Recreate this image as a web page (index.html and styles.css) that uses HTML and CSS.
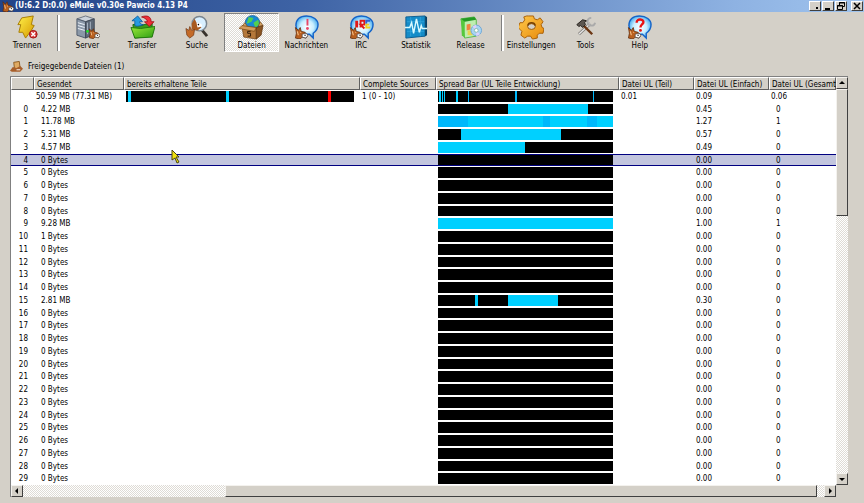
FILE: index.html
```html
<!DOCTYPE html>
<html lang="de">
<head>
<meta charset="utf-8">
<title>eMule</title>
<link rel="stylesheet" href="styles.css">
</head>
<body>
<svg class="defs" aria-hidden="true">
  <defs>
    <linearGradient id="gold" x2="1" y2="1"><stop offset="0" stop-color="#fff04a"/><stop offset="1" stop-color="#d69a00"/></linearGradient>
    <linearGradient id="orange" x2="1" y2="1"><stop offset="0" stop-color="#ffc94a"/><stop offset="1" stop-color="#e78a0c"/></linearGradient>
    <linearGradient id="green" x2="1" y2="1"><stop offset="0" stop-color="#9be83a"/><stop offset="1" stop-color="#2c9e12"/></linearGradient>
    <radialGradient id="bubble"><stop offset="0" stop-color="#fff"/><stop offset=".6" stop-color="#c8eeff"/><stop offset="1" stop-color="#58b4f0"/></radialGradient>
    <symbol id="mule" viewBox="0 0 14 13">
      <path d="M1 1l3 3 2-3 1 4 4 1 3 3-2 3-4-1-2 2-5-1 1-5z" fill="#b9601f" stroke="#5e2a0a" stroke-width=".8"/>
      <path d="M8 8l4-1 2 2-2 3-4-1z" fill="#fff" stroke="#444" stroke-width=".7"/>
      <path d="M3 5l1 4M6 6h1" stroke="#ffd09a"/><circle cx="11" cy="9" r=".8" fill="#222"/>
    </symbol>
    <symbol id="balloon" viewBox="0 0 26 26">
      <path d="M13 1C6 1 2 5 2 11c0 5 4 9 10 9l4 0 4 4 0-5c3-2 5-5 5-9 0-5-5-9-12-9z" fill="url(#bubble)" stroke="#1464c8" stroke-width="1.5"/>
    </symbol>
  </defs>
</svg>
<header class="titlebar">
  <svg class="app-icon" viewBox="0 0 14 13"><use href="#mule"/></svg>
  <h1>(U:6.2 D:0.0) eMule v0.30e Pawcio 4.13 P4</h1>
  <div class="window-buttons">
    <button aria-label="In den Tray"><svg viewBox="0 0 10 8"><path d="M6 6h2" stroke="#000" stroke-width="2"/></svg></button>
    <button aria-label="Minimieren"><svg viewBox="0 0 10 8"><path d="M2 7h5" stroke="#000" stroke-width="2"/></svg></button>
    <button aria-label="Wiederherstellen"><svg viewBox="0 0 10 8"><path d="M3.5 3V.5h5v4H7M1.500 3.500h5v4h-5zM3 1h6M1 4h6" fill="none" stroke="#000"/></svg></button>
    <button class="close" aria-label="Schließen"><svg viewBox="0 0 10 8"><path d="M2 1l6 6M8 1L2 7" stroke="#000" stroke-width="1.500"/></svg></button>
  </div>
</header>
<nav class="toolbar">
  <div class="group one">
    <button><svg viewBox="0 0 26 26"><path d="M7 3l12-2-2 9 3 1-3 5-6 8-3-6-4 0 2-8-3 0z" fill="url(#gold)" stroke="#a87c00"/><circle cx="19" cy="20" r="4" fill="#d83c3c" stroke="#a01010"/><path d="M17 18l4 4M21 18l-4 4" stroke="#fff" stroke-width="1.500"/></svg>Trennen</button>
  </div>
  <div class="group eight">
    <button><svg viewBox="0 0 26 26"><path d="M2 4l9-3 9 3-9 3z" fill="#ccd2da" stroke="#6c7480"/><path d="M2 4l9 3v17l-9-3z" fill="#8b98a8" stroke="#505c6c"/><path d="M20 4l-9 3v17l9-4z" fill="#5d6978" stroke="#3f4955"/><path d="M3 8l7 2M3 11l7 2M3 14l7 2" stroke="#eef4fa"/><path d="M13 8v12M16 7v12" stroke="#a7b2bf"/><circle cx="13" cy="17" r="1.500" fill="#1ee01e"/><use href="#mule" x="14" y="13" width="12" height="12"/></svg>Server</button>
    <button><svg viewBox="0 0 26 26"><path d="M3 10l6-1 2 2 12-3v14l-18 2z" fill="#3a9b1c" stroke="#1b6c0c"/><path d="M1 13l4 11 18-1 3-11-15 2z" fill="url(#green)" stroke="#20780c"/><path d="M5 11V6H2l6-5 5 6h-3c0 2 2 3 4 3-4 2-8 2-9 1z" fill="#269ae0" stroke="#09549a" stroke-width=".8"/><path d="M12 2c5-2 10-1 10 5h3l-5 5-5-5h3c0-2-2-4-6-5z" fill="#f03038" stroke="#9c0810" stroke-width=".8"/></svg>Transfer</button>
    <button><svg viewBox="0 0 26 26"><path d="M19 16l5 6" stroke="#38322c" stroke-width="3"/><circle cx="16" cy="9" r="7.500" fill="#d8efff" stroke="#7a858f" stroke-width="1.500"/><path d="M8 9l3-5 2 4 4 2 1 3-4 3-6-1z" fill="#a85a20"/><path d="M13 8l5 1 1 3-5 1z" fill="#fff"/><circle cx="15" cy="10" r=".8"/><path d="M2 14l3 2 1-4 2 4 3-1-1 6-4 3-3-3z" fill="#c46a28" stroke="#6e3410" stroke-width=".7"/></svg>Suche</button>
    <button class="active" aria-pressed="true"><svg viewBox="0 0 26 26"><circle cx="14" cy="8" r="7.500" fill="#188ad4" stroke="#075490" stroke-width=".7"/><path d="M10 2l5 1-2 4-5 2zM15 8l5-3 1 5-4 3z" fill="#52cf50"/><path d="M3 12l3-4 3 4zM25 11l-3-4-2 5z" fill="#d7a566" stroke="#724514" stroke-width=".7"/><path d="M3 12l15 1v12l-13-2z" fill="#b5783a" stroke="#6c3d10" stroke-width=".7"/><path d="M18 13l7-2-2 10-5 4z" fill="#8a5422" stroke="#5a310c" stroke-width=".7"/><path d="M0 14l3-3 15 2-2 4z" fill="#d39c5c" stroke="#724514" stroke-width=".7"/><path d="M12 17h-3v2h3v3h-3" fill="none" stroke="#2e1a06"/></svg>Dateien</button>
    <button><svg viewBox="0 0 26 26"><use href="#balloon"/><path d="M14 4v7" stroke="#e84868" stroke-width="2"/><circle cx="14" cy="14" r="1.500" fill="#e84868"/><use href="#mule" x="0" y="12" width="15" height="13"/></svg>Nachrichten</button>
    <button><svg viewBox="0 0 26 26"><use href="#balloon"/><path d="M8 6v7" stroke="#e01818" stroke-width="3"/><path d="M12 13V6h4v4h-4l4 4" fill="none" stroke="#e01818" stroke-width="2"/><path d="M22 6h-4v3" fill="none" stroke="#3060d0" stroke-width="2"/><path d="M18 9v4h4M18 10h3" fill="none" stroke="#f0cf20" stroke-width="2"/><use href="#mule" x="0" y="12" width="15" height="13"/></svg>IRC</button>
    <button><svg viewBox="0 0 26 26"><path d="M3 2l20-1v21l-20 2z" fill="#148cc8" stroke="#0b5e92"/><path d="M23 1l2 1v19l-2 1z" fill="#064268"/><path d="M4 7h18M4 17h18M8 2v20M18 2v20" stroke="#35a9de" stroke-width=".7"/><path d="M2 13h5l2-5 2 11 3-15 3 14 2-7 1 3h5" fill="none" stroke="#d9faff" stroke-width="1.500"/></svg>Statistik</button>
    <button><svg viewBox="0 0 26 26"><path d="M3 4l14-2 2 3v17l-12 2z" fill="#bfeeb0" stroke="#58b94a"/><path d="M3 4l4 2v18l-3-3z" fill="#55c83d"/><path d="M3 4l14-2 2 3-12 2z" fill="#249a24"/><path d="M9 10l4-1v6l-4 1z" fill="#f08340"/><path d="M10 16h5v5h-5z" fill="#e8d34e"/><circle cx="19" cy="16" r="5.500" fill="#a7d4f4" stroke="#6fa7d4"/><path d="M19 16l-4-4 4-2zM19 16l4 4-4 2z" fill="#ddd1fc"/><circle cx="19" cy="16" r="2" fill="#fff" stroke="#8ba"/></svg>Release</button>
  </div>
  <div class="group three">
    <button><svg viewBox="0 0 26 26"><path d="M10 1h5l1 3 3 1 3-2 3 4-2 3 1 3 2 1-1 5-4 0-2 2 0 3-5 1-2-3h-3l-3 2-4-3 1-4-2-2-2-2 2-5 3 0 2-3-1-3 3-1z" fill="url(#orange)" stroke="#a95f06"/><ellipse cx="13" cy="12" rx="4" ry="3" fill="#d4d0c8" stroke="#9a5806"/><path d="M9 11c1-4 7-4 8 0" fill="none" stroke="#754005" stroke-width="1.500"/></svg>Einstellungen</button>
    <button><svg viewBox="0 0 26 26"><path d="M18 9L6 20" stroke="#76736e" stroke-width="3"/><path d="M18 9L6 20" stroke="#e5e5e5" stroke-width="1.500"/><path d="M23 8a4 4 0 1 1-4-5" fill="none" stroke="#aaa" stroke-width="2"/><path d="M10 10l10 10" stroke="#6c3714" stroke-width="2.500"/><path d="M4 10l6-5 4 1-2 2 1 2-3 3-2-2-2 1z" fill="#5c5650" stroke="#25211d"/></svg>Tools</button>
    <button><svg viewBox="0 0 26 26"><use href="#balloon"/><path d="M10 8c0-5 8-4 7 0-1 2-3 2-3 5" fill="none" stroke="#e81414" stroke-width="2.500"/><circle cx="14" cy="16" r="1.500" fill="#e81414"/><use href="#mule" x="0" y="12" width="15" height="13"/></svg>Help</button>
  </div>
</nav>
<main>
  <h2><svg viewBox="0 0 14 12"><path d="M4 1l6-1 1 8-6 1z" fill="#e0aa62" stroke="#8b5a20"/><path d="M0 10l3-4 4 1 4-2 3 3-3 3H2z" fill="#a85f2b"/><path d="M7 9h4" stroke="#fff"/></svg>Freigegebende Dateien (1)</h2>
  <div class="list">
    <table>
      <thead>
        <tr><th></th><th>Gesendet</th><th>bereits erhaltene Teile</th><th>Complete Sources</th><th>Spread Bar (UL Teile Entwicklung)</th><th>Datei UL (Teil)</th><th>Datei UL (Einfach)</th><th>Datei UL (Gesamt</th></tr>
      </thead>
      <tbody>
        <tr class="file"><td></td><td>50.59 MB (77.31 MB)</td><td><div class="bar parts"><i style="left:1%;width:1%"></i><i style="left:44%;width:1%"></i><i class="missing" style="left:88.5%;width:1.3%"></i></div></td><td>1 (0 - 10)</td><td><div class="bar"><i style="left:0.5%;width:1%"></i><i style="left:2%;width:0.6%"></i><i style="left:3.2%;width:0.8%"></i><i style="left:10.3%;width:1%"></i><i class="mid" style="left:17.2%;width:0.6%"></i><i class="mid" style="left:44.2%;width:0.9%"></i><i class="mid" style="left:88.6%;width:0.6%"></i></div></td><td>0.01</td><td>0.09</td><td>0.06</td></tr>
        <tr><td>0</td><td>4.22 MB</td><td></td><td></td><td><div class="bar"><i style="left:40%;width:45.5%"></i></div></td><td></td><td>0.45</td><td>0</td></tr>
        <tr><td>1</td><td>11.78 MB</td><td></td><td></td><td><div class="bar"><i style="left:0%;width:100%"></i><i class="mid" style="left:0%;width:17%"></i><i class="mid" style="left:60%;width:4%"></i><i class="mid" style="left:85%;width:6%"></i></div></td><td></td><td>1.27</td><td>1</td></tr>
        <tr><td>2</td><td>5.31 MB</td><td></td><td></td><td><div class="bar"><i style="left:13%;width:57%"></i></div></td><td></td><td>0.57</td><td>0</td></tr>
        <tr><td>3</td><td>4.57 MB</td><td></td><td></td><td><div class="bar"><i style="left:0%;width:49.5%"></i></div></td><td></td><td>0.49</td><td>0</td></tr>
        <tr class="selected"><td>4</td><td>0 Bytes</td><td></td><td></td><td><div class="bar"></div></td><td></td><td>0.00</td><td>0</td></tr>
        <tr><td>5</td><td>0 Bytes</td><td></td><td></td><td><div class="bar"></div></td><td></td><td>0.00</td><td>0</td></tr>
        <tr><td>6</td><td>0 Bytes</td><td></td><td></td><td><div class="bar"></div></td><td></td><td>0.00</td><td>0</td></tr>
        <tr><td>7</td><td>0 Bytes</td><td></td><td></td><td><div class="bar"></div></td><td></td><td>0.00</td><td>0</td></tr>
        <tr><td>8</td><td>0 Bytes</td><td></td><td></td><td><div class="bar"></div></td><td></td><td>0.00</td><td>0</td></tr>
        <tr><td>9</td><td>9.28 MB</td><td></td><td></td><td><div class="bar"><i style="left:0%;width:100%"></i></div></td><td></td><td>1.00</td><td>1</td></tr>
        <tr><td>10</td><td>1 Bytes</td><td></td><td></td><td><div class="bar"></div></td><td></td><td>0.00</td><td>0</td></tr>
        <tr><td>11</td><td>0 Bytes</td><td></td><td></td><td><div class="bar"></div></td><td></td><td>0.00</td><td>0</td></tr>
        <tr><td>12</td><td>0 Bytes</td><td></td><td></td><td><div class="bar"></div></td><td></td><td>0.00</td><td>0</td></tr>
        <tr><td>13</td><td>0 Bytes</td><td></td><td></td><td><div class="bar"></div></td><td></td><td>0.00</td><td>0</td></tr>
        <tr><td>14</td><td>0 Bytes</td><td></td><td></td><td><div class="bar"></div></td><td></td><td>0.00</td><td>0</td></tr>
        <tr><td>15</td><td>2.81 MB</td><td></td><td></td><td><div class="bar"><i style="left:21%;width:2%"></i><i style="left:40%;width:28.4%"></i></div></td><td></td><td>0.30</td><td>0</td></tr>
        <tr><td>16</td><td>0 Bytes</td><td></td><td></td><td><div class="bar"></div></td><td></td><td>0.00</td><td>0</td></tr>
        <tr><td>17</td><td>0 Bytes</td><td></td><td></td><td><div class="bar"></div></td><td></td><td>0.00</td><td>0</td></tr>
        <tr><td>18</td><td>0 Bytes</td><td></td><td></td><td><div class="bar"></div></td><td></td><td>0.00</td><td>0</td></tr>
        <tr><td>19</td><td>0 Bytes</td><td></td><td></td><td><div class="bar"></div></td><td></td><td>0.00</td><td>0</td></tr>
        <tr><td>20</td><td>0 Bytes</td><td></td><td></td><td><div class="bar"></div></td><td></td><td>0.00</td><td>0</td></tr>
        <tr><td>21</td><td>0 Bytes</td><td></td><td></td><td><div class="bar"></div></td><td></td><td>0.00</td><td>0</td></tr>
        <tr><td>22</td><td>0 Bytes</td><td></td><td></td><td><div class="bar"></div></td><td></td><td>0.00</td><td>0</td></tr>
        <tr><td>23</td><td>0 Bytes</td><td></td><td></td><td><div class="bar"></div></td><td></td><td>0.00</td><td>0</td></tr>
        <tr><td>24</td><td>0 Bytes</td><td></td><td></td><td><div class="bar"></div></td><td></td><td>0.00</td><td>0</td></tr>
        <tr><td>25</td><td>0 Bytes</td><td></td><td></td><td><div class="bar"></div></td><td></td><td>0.00</td><td>0</td></tr>
        <tr><td>26</td><td>0 Bytes</td><td></td><td></td><td><div class="bar"></div></td><td></td><td>0.00</td><td>0</td></tr>
        <tr><td>27</td><td>0 Bytes</td><td></td><td></td><td><div class="bar"></div></td><td></td><td>0.00</td><td>0</td></tr>
        <tr><td>28</td><td>0 Bytes</td><td></td><td></td><td><div class="bar"></div></td><td></td><td>0.00</td><td>0</td></tr>
        <tr><td>29</td><td>0 Bytes</td><td></td><td></td><td><div class="bar"></div></td><td></td><td>0.00</td><td>0</td></tr>
      </tbody>
    </table>
    <div class="scroll vertical">
      <button aria-label="Nach oben"><svg viewBox="0 0 8 8"><path d="M1 5l3-3 3 3z"/></svg></button>
      <div class="track"><div class="thumb"></div></div>
      <button aria-label="Nach unten"><svg viewBox="0 0 8 8"><path d="M1 3l3 3 3-3z"/></svg></button>
    </div>
    <div class="scroll horizontal">
      <button aria-label="Nach links"><svg viewBox="0 0 8 8"><path d="M5 1L2 4l3 3z"/></svg></button>
      <div class="track"><div class="thumb"></div></div>
      <button aria-label="Nach rechts"><svg viewBox="0 0 8 8"><path d="M3 1l3 3-3 3z"/></svg></button>
    </div>
  </div>
</main>
<svg class="cursor" viewBox="0 0 9 15" aria-hidden="true"><path d="M1 1l7 7H5l3 5-2 1-2-5-3 2z" fill="#f0e010" stroke="#4a4610"/></svg>
</body>
</html>
```
FILE: styles.css
```css
* { box-sizing: border-box; }

body {
  margin: 0;
  height: 100vh;
  display: flex;
  flex-direction: column;
  overflow: hidden;
  background: #d4d0c8;
  color: #000;
  font: 8px/12px "DejaVu Sans Condensed", "DejaVu Sans", sans-serif;
}

button {
  margin: 0;
  padding: 0;
  border: 0;
  background: #d4d0c8;
  color: inherit;
  font: inherit;
}

svg { display: block; }
.defs { position: absolute; width: 0; height: 0; }

.titlebar {
  flex: none;
  height: 12px;
  padding: 0 1px 0 2px;
  display: flex;
  align-items: center;
  gap: 1px;
  background: linear-gradient(90deg, #224488, #3e63a5 35%, #8eb2e2 85%, #a0c4ee);
}
.app-icon { width: 12px; height: 11px; }
.titlebar h1 {
  margin: 0;
  color: #fff;
  font-size: 8px;
  line-height: 12px;
  white-space: nowrap;
}
.window-buttons { margin-left: auto; display: flex; gap: 1px; }
.window-buttons button {
  width: 12px;
  height: 10px;
  border: 1px solid;
  border-color: #fff #404040 #404040 #fff;
}
.window-buttons .close { margin-left: 3px; }
.window-buttons svg { width: 10px; height: 8px; }

.toolbar { flex: none; display: flex; height: 41px; padding-top: 1px; }
.group { display: flex; }
.one { width: 54px; }
.eight { width: 438px; }
.three { width: 163px; }
.group + .group { margin-left: 6px; position: relative; }
.group + .group::before {
  content: "";
  position: absolute;
  left: -3px;
  top: 2px;
  bottom: 2px;
  width: 2px;
  border-left: 1px solid #808080;
  background: #fff;
}
.toolbar button {
  flex: 1 1 0;
  min-width: 0;
  height: 39px;
  padding-top: 1px;
  border: 1px solid transparent;
  display: flex;
  flex-direction: column;
  align-items: center;
  justify-content: flex-start;
  white-space: nowrap;
}
.toolbar svg { flex: none; width: 25px; height: 25px; }
.toolbar .active {
  border-color: #808080 #fff #fff #808080;
  background: repeating-conic-gradient(#fff 0 25%, #dedbd5 0 50%) 0 0 / 2px 2px;
}

main {
  flex: 1;
  min-height: 0;
  padding: 8px 16px 6px 10px;
  display: flex;
  flex-direction: column;
}
h2 {
  margin: 0 0 3px;
  height: 12px;
  display: flex;
  align-items: center;
  gap: 5px;
  font-size: 8px;
  font-weight: normal;
}
h2 svg { width: 13px; height: 12px; }

.list {
  flex: 1;
  min-height: 0;
  display: grid;
  grid-template: minmax(0, 1fr) 12px / minmax(0, 1fr) 12px;
  border-left: 1px solid #808080;
  border-top: 1px solid #808080;
}
table {
  display: flex;
  flex-direction: column;
  min-height: 0;
  background: #fff;
  white-space: nowrap;
}
thead { display: block; }
tbody {
  flex: 1;
  min-height: 0;
  display: grid;
  grid-auto-rows: minmax(0, 1fr);
}
tr {
  display: grid;
  grid-template-columns: 23fr 90fr 236fr 76fr 183fr 75fr 75fr 67fr;
  grid-template-rows: minmax(0, 1fr);
}
th, td { min-width: 0; padding: 0; text-align: left; }
th {
  height: 13px;
  padding: 1px 0 0 2px;
  border: 1px solid;
  border-color: #fff #606060 #606060 #fff;
  background: #d4d0c8;
  font-weight: normal;
}
td { padding: 2px 0 0 7px; line-height: 10px; }
td:first-child { padding: 2px 6px 0 0; text-align: right; }
td:nth-child(3), td:nth-child(4), td:nth-child(5),
td:nth-child(6), td:nth-child(7), .file td { padding-left: 2px; }
td:nth-child(3), td:nth-child(5) {
  padding-top: 1px;
  padding-right: 6px;
  padding-bottom: 1px;
}

.selected {
  background: #c2c5de;
  border-top: 1px solid #000080;
  border-bottom: 1px solid #000080;
}
.selected td { padding-top: 1px; }
.selected td:nth-child(5) { padding-top: 0; padding-bottom: 0; }

.bar { position: relative; height: 100%; background: #000; }
.bar i { position: absolute; top: 0; bottom: 0; background: #00d0ff; }
.bar .mid { background: #00b8fb; }
.bar .missing { background: #f00; }

.scroll { display: flex; background: #d4d0c8; }
.vertical { flex-direction: column; }
.scroll button, .thumb {
  border: 1px solid;
  border-color: #f4f2ee #404040 #404040 #f4f2ee;
  background: #d4d0c8;
}
.scroll button {
  flex: none;
  width: 12px;
  height: 12px;
  display: grid;
  place-items: center;
}
.scroll svg { width: 8px; height: 8px; }
.track {
  flex: 1;
  min-height: 0;
  background: repeating-conic-gradient(#fff 0 25%, #dedbd5 0 50%) 0 0 / 2px 2px;
}
.vertical .thumb { height: 33%; }
.horizontal .track { display: grid; grid-template-columns: 202fr 592fr 7fr; }
.horizontal .thumb { grid-column: 2; height: 12px; }

.cursor { position: absolute; left: 171px; top: 149px; width: 9px; height: 15px; }
```
